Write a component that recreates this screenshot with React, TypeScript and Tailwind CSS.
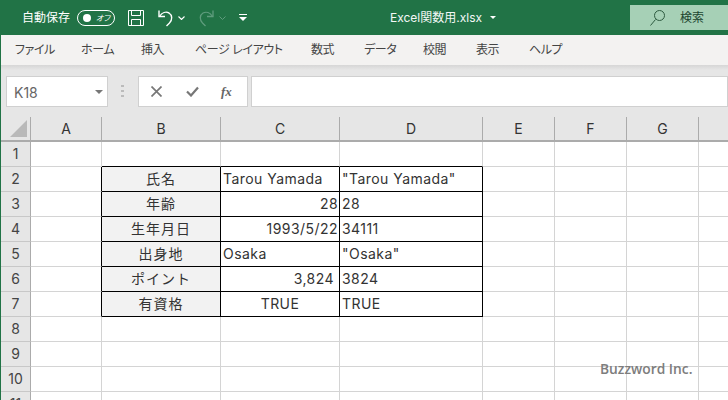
import React from "react";

const jp = `font-['Inter','Noto_Sans_CJK_JP',sans-serif]`;
const tabs: [string, string][] = [
  ["ファイル", "w-[66px]"],
  ["ホーム", "w-[60px]"],
  ["挿入", "w-[54px]"],
  ["ページ レイアウト", "w-[116px]"],
  ["数式", "w-[53px]"],
  ["データ", "w-[59px]"],
  ["校閲", "w-[53px]"],
  ["表示", "w-[53px]"],
  ["ヘルプ", "w-[60px]"],
];
const cols: [string, string][] = [
  ["A", "w-[71px]"],
  ["B", "w-[119px]"],
  ["C", "w-[119px]"],
  ["D", "w-[143px]"],
  ["E", "w-[72px]"],
  ["F", "w-[72px]"],
  ["G", "w-[72px]"],
  ["", "w-[30px]"],
];
type Cell = { t?: string; a?: "l" | "r" | "c" | "rp"; bg?: boolean };
const table: Cell[][] = [
  [{ t: "氏名", a: "c", bg: true }, { t: "Tarou Yamada" }, { t: '"Tarou Yamada"' }],
  [{ t: "年齢", a: "c", bg: true }, { t: "28", a: "r" }, { t: "28" }],
  [{ t: "生年月日", a: "c", bg: true }, { t: "1993/5/22", a: "r" }, { t: "34111" }],
  [{ t: "出身地", a: "c", bg: true }, { t: "Osaka" }, { t: '"Osaka"' }],
  [{ t: "ポイント", a: "c", bg: true }, { t: "3,824", a: "rp" }, { t: "3824" }],
  [{ t: "有資格", a: "c", bg: true }, { t: "TRUE", a: "c" }, { t: "TRUE" }],
];
const rowNums = [1, 2, 3, 4, 5, 6, 7, 8, 9, 10, 11];

function Sheet() {
  return (
    <div className="flex flex-col">
      <div className="flex h-[25px] bg-[#e6e6e6] border-b-2 border-[#ababab]">
        <div className="w-[30px] shrink-0 border-r border-[#ababab] flex items-end justify-end pr-[3px] pb-[3px]">
          <svg width="17" height="17" viewBox="0 0 17 17"><polygon points="17,0 17,17 0,17" fill="#b9b9b9" /></svg>
        </div>
        {cols.map(([n, w], i) => (
          <div key={i} className={`${w} shrink-0 border-r border-[#ababab] flex items-center justify-center text-[14px] text-[#333]`}>{n}</div>
        ))}
      </div>
      {rowNums.map((r) => {
        const row = r >= 2 && r <= 7 ? table[r - 2] : null;
        return (
          <div key={r} className="flex h-[25px]">
            <div className="w-[30px] shrink-0 bg-[#e6e6e6] border-r border-b border-r-[#ababab] border-b-[#c8c8c8] flex items-center justify-center pb-[2px] text-[14px] text-[#444]">{r}</div>
            {cols.map(([, w], ci) => {
              const inT = ci >= 1 && ci <= 3;
              const cell = row && inT ? row[ci - 1] : null;
              const blackR = !!row && ci <= 3;
              const blackB = r <= 7 && inT;
              const align =
                cell?.a === "r"
                  ? "justify-end pr-[1px]"
                  : cell?.a === "rp"
                    ? "justify-end pr-[5px]"
                    : cell?.a === "c"
                      ? "justify-center"
                      : "pl-[2px]";
              return (
                <div
                  key={ci}
                  className={`${w} shrink-0 border-r border-b flex items-center pb-[2px] overflow-visible whitespace-nowrap text-[14px] text-[#333] ${cell?.bg ? "tracking-[1px]" : "tracking-[0.45px]"} ${align} ${blackR ? "border-r-black" : "border-r-[#d4d4d4]"} ${blackB ? "border-b-black" : "border-b-[#d4d4d4]"} ${cell?.bg ? "bg-[#f2f2f2]" : "bg-white"}`}
                >
                  {cell?.t}
                </div>
              );
            })}
          </div>
        );
      })}
    </div>
  );
}

export default function App() {
  return (
    <div className={`relative w-[728px] h-[400px] overflow-hidden bg-white ${jp}`}>
      <div className="h-[35px] bg-[#217346] flex items-center text-white">
        <span className="ml-[22px] text-[12px] w-[48px] whitespace-nowrap">自動保存</span>
        <div className="ml-[7px] w-[38px] h-[16px] rounded-full border border-white flex items-center pl-[5px] shrink-0">
          <span className="w-[8px] h-[8px] rounded-full bg-white shrink-0" />
          <span className="ml-[5px] text-[8px] italic leading-none whitespace-nowrap [font-feature-settings:'palt']">オフ</span>
        </div>
        <svg className="ml-[13px]" width="16" height="16" viewBox="0 0 16 16" fill="none" stroke="#fff" strokeWidth="1">
          <path d="M.5.5h15v15H.5z" />
          <path d="M3.500.5v5h9v-5M3.500 15.500v-6h9v6" />
        </svg>
        <svg className="ml-[14px]" width="16" height="18" viewBox="0 0 16 18" fill="none" stroke="#fff" strokeWidth="1.4">
          <path d="M1 1.500v6h6" />
          <path d="M1.500 7.500C4 3.500 8 2.500 11 4c3.500 2 3.500 7 .5 10l-3 3" />
        </svg>
        <svg className="ml-[4px]" width="7" height="4" viewBox="0 0 7 4" fill="none" stroke="#fff" strokeWidth="1.1"><path d="M.5.5l3 3 3-3" /></svg>
        <svg className="ml-[13px]" width="16" height="18" viewBox="0 0 16 18" fill="none" stroke="#5f9c7d" strokeWidth="1.3">
          <path d="M15 1.500v6H9" />
          <path d="M14.500 7.500C12 3.500 8 2.500 5 4c-3.500 2-3.500 7-.5 10l3 3" />
        </svg>
        <svg className="ml-[5px]" width="7" height="4" viewBox="0 0 7 4" fill="none" stroke="#5f9c7d" strokeWidth="1"><path d="M.5.5l3 3 3-3" /></svg>
        <svg className="ml-[13px]" width="8" height="7" viewBox="0 0 8 7" fill="#fff"><path d="M0 0h8v1H0zM0 3h8L4 7z" /></svg>
        <span className="ml-[143px] text-[12px] w-[100px] text-[#f4f8f6] whitespace-nowrap">Excel関数用.xlsx</span>
        <svg width="6" height="3" viewBox="0 0 6 3" fill="#fff"><path d="M0 0h6L3 3z" /></svg>
        <div className="ml-auto self-start mt-[5px] w-[98px] h-[25px] bg-[#a6d0b6] flex items-center text-[#20452f]">
          <svg className="ml-[20px]" width="15" height="16" viewBox="0 0 15 16" fill="none" stroke="#2e5a40" strokeWidth="1">
            <circle cx="9.500" cy="5.500" r="5" />
            <path d="M5.500 9.500L.5 15.500" />
          </svg>
          <span className="ml-[15px] text-[12px]">検索</span>
        </div>
      </div>
      <div className="h-[30px] bg-[#f3f2f1] flex items-center text-[12px] tracking-[-0.4px] text-[#444] ml-px [font-feature-settings:'palt']">
        {tabs.map(([t, c]) => (
          <span key={t} className={`${c} pl-[14px] shrink-0 whitespace-nowrap`}>{t}</span>
        ))}
      </div>
      <div className="h-[52px] ml-px bg-[#e6e6e6] bg-gradient-to-b from-[#d6d6d6] to-[#e6e6e6] bg-[length:100%_5px] bg-no-repeat flex items-start pt-[11px]">
        <div className="ml-[5px] w-[102px] h-[31px] bg-white border border-[#d0d0d0] flex items-center justify-between pl-[7px] pr-[4px] pt-[1px] text-[14px] text-[#666]">
          K18
          <svg width="8" height="4" viewBox="0 0 8 4" fill="#777"><path d="M0 0h8L4 4z" /></svg>
        </div>
        <div className="ml-[13px] w-[3px] h-[12px] mt-[9px] flex flex-col justify-between">
          <span className="h-[2px] bg-[#bbb]" /><span className="h-[2px] bg-[#bbb]" /><span className="h-[2px] bg-[#bbb]" />
        </div>
        <div className="ml-[14px] w-[110px] h-[31px] bg-white border border-[#d0d0d0] flex items-center">
          <svg className="ml-[12px]" width="11" height="11" viewBox="0 0 11 11" stroke="#777" strokeWidth="1.700"><path d="M.5.5l10 10M10.500.5l-10 10" /></svg>
          <svg className="ml-[24px]" width="13" height="11" viewBox="0 0 13 11" fill="none" stroke="#777" strokeWidth="2.200"><path d="M1 5.500l4 4 7-8" /></svg>
          <span className="ml-[22px] text-[13px] italic font-['Liberation_Serif',serif] font-bold text-[#666]">fx</span>
        </div>
        <div className="ml-[3px] flex-1 h-[31px] bg-white border border-[#d0d0d0]" />
      </div>
      <div className="ml-px"><Sheet /></div>
      <div className="absolute left-0 top-[35px] bottom-0 w-px bg-[#217346]" />
      <span className="absolute left-[600px] top-[359px] text-[13.8px] font-semibold text-[#7d7d7d] font-['Open_Sans',sans-serif] whitespace-nowrap">Buzzword Inc.</span>
    </div>
  );
}
